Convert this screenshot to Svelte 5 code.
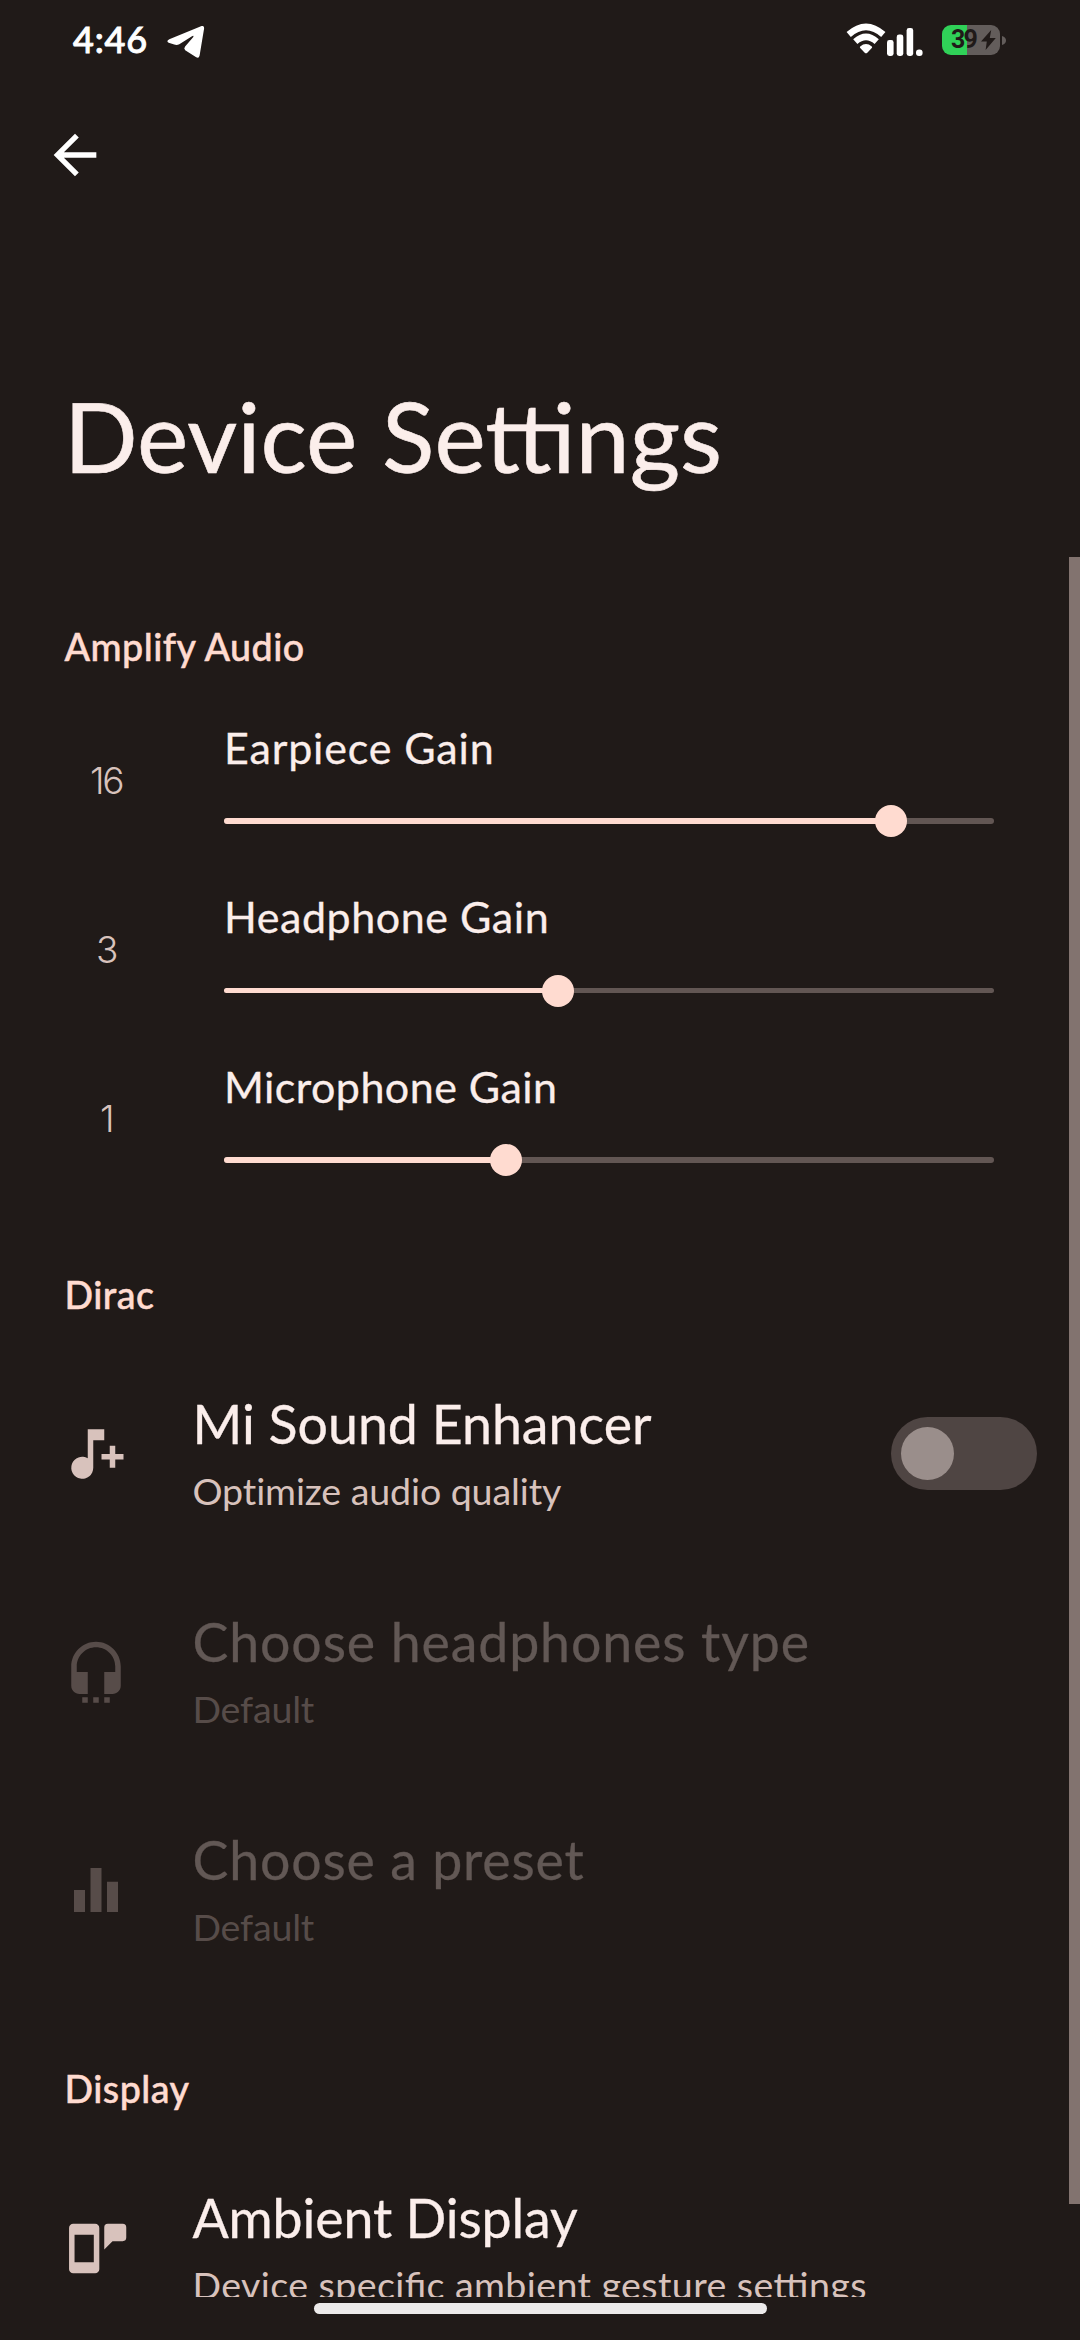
<script>
  // `tracking` is the letter spacing of each text, in pixels
  const sliders = [
    { label: 'Earpiece Gain', value: 16, fill: 86.6, tracking: 0.85 },
    { label: 'Headphone Gain', value: 3, fill: 43.4, tracking: 0.55 },
    { label: 'Microphone Gain', value: 1, fill: 36.6, tracking: 0.45 }
  ];
  const dirac = [
    { icon: 'note', title: 'Mi Sound Enhancer', sub: 'Optimize audio quality', toggle: true, tracking: 0, subTracking: -0.1 },
    { icon: 'headset', title: 'Choose headphones type', sub: 'Default', disabled: true, tracking: 0.87, subTracking: -0.2 },
    { icon: 'bars', title: 'Choose a preset', sub: 'Default', disabled: true, tracking: 0.8, subTracking: -0.2 }
  ];
  const display = [
    {
      icon: 'ambient',
      title: 'Ambient Display',
      sub: 'Device specific ambient gesture settings',
      ligatures: true,
      tracking: -0.15,
      subTracking: 0.4
    }
  ];
  const paths = {
    note: 'M9 3h6v4h-4v10a4 4 0 1 1-2-3.46zM17 9h2v3h3v2h-3v3h-2v-3h-3v-2h3z',
    headset:
      'M12 1c-4.97 0-9 4.03-9 9v7c0 1.66 1.34 3 3 3h3v-8H5v-2c0-3.87 3.13-7 7-7s7 3.13 7 7v2h-4v8h3c1.66 0 3-1.34 3-3v-7c0-4.97-4.03-9-9-9zM7 21.2h2v2H7zM11 21.2h2v2h-2zM15 21.2h2v2h-2z',
    bars: 'M10 20h4V4h-4zM4 20h4v-8H4zM16 9v11h4V9z',
    ambient:
      'M3.7 3.2h8a1.5 1.5 0 0 1 1.5 1.5v15a1.5 1.5 0 0 1-1.5 1.5h-8a1.5 1.5 0 0 1-1.5-1.5v-15a1.5 1.5 0 0 1 1.5-1.5zM4.2 7.2v10h7v-10zM16.3 3.2h5.4a1.3 1.3 0 0 1 1.3 1.3v3.7a1.3 1.3 0 0 1-1.3 1.3h-3.7l-3 3v-8a1.3 1.3 0 0 1 1.3-1.3z'
  };
</script>

{#snippet pref(item)}
  <div class="pref" class:disabled={item.disabled}>
    <svg class="icon" viewBox="0 0 24 24"><path fill-rule="evenodd" d={paths[item.icon]} /></svg>
    <div class="texts">
      <div class="title" style="letter-spacing:{item.tracking}px">{item.title}</div>
      <div class="sub" class:liga={item.ligatures} style="letter-spacing:{item.subTracking}px">{item.sub}</div>
    </div>
    {#if item.toggle}
      <div class="switch"><div class="knob"></div></div>
    {/if}
  </div>
{/snippet}

<div class="screen">
  <div class="status">
    <span class="time">4:46</span>
    <svg class="plane" viewBox="0 0 38 34"><path d="M2.3 14.2 34.6 1.1Q37.6.3 37.1 3.5L32.6 30.6Q31.9 34 28.8 32.1L18.2 25.2Q16.4 23.6 18.1 21.6L26.3 11.9Q27 10.1 25 11.2L12.3 19.2Q10 20.5 7.2 19.6L1.7 17.8Q-1.2 16 2.3 14.2Z" /></svg>
    <span class="spacer"></span>
    <svg class="wifi" viewBox="0 0 40 30">
      <path class="arc" d="M2.7 10.5Q20-4.8 37.3 10.5" />
      <path class="arc" d="M9.3 17.6Q20 8.2 30.7 17.6" />
      <path d="M14.2 22.4Q20 17.6 25.8 22.4Q26.5 23.2 25.8 23.9L21.3 28.7Q20 30 18.7 28.7L14.2 23.9Q13.5 23.2 14.2 22.4Z" />
    </svg>
    <svg class="signal" viewBox="0 0 36 28">
      <rect x="0" y="12" width="6.6" height="16" rx="2.4" />
      <rect x="9.7" y="6.5" width="6.6" height="21.5" rx="2.4" />
      <rect x="19.6" y="0" width="6.6" height="28" rx="2.4" />
      <rect x="29" y="21.4" width="6.6" height="6.6" rx="3" />
    </svg>
    <div class="battery">
      <span class="pct">39</span>
      <svg class="bolt" viewBox="0 0 15 20"><path d="M10.2 0 0 11.4h5.8L4.6 20 14.8 8H8.8z" /></svg>
    </div>
    <svg class="nub" viewBox="0 0 4 9"><path d="M0 0Q4 1.2 4 4.5T0 9z" /></svg>
  </div>

  <div class="appbar">
    <svg class="back" viewBox="0 0 24 24"><path d="M20 11H7.83l5.59-5.59L12 4l-8 8 8 8 1.41-1.41L7.83 13H20z" /></svg>
  </div>

  <h1>Device Settings</h1>

  <div class="list">
    <div class="label first">Amplify Audio</div>
    <div class="sliders">
      {#each sliders as s}
        <div class="slider">
          <div class="value">{s.value}</div>
          <div class="control">
            <div class="name" style="letter-spacing:{s.tracking}px">{s.label}</div>
            <div class="track">
              <div class="fill" style="width:{s.fill}%"><div class="thumb"></div></div>
            </div>
          </div>
        </div>
      {/each}
    </div>

    <div class="label dirac">Dirac</div>
    {#each dirac as item}{@render pref(item)}{/each}

    <div class="label display">Display</div>
    {#each display as item}{@render pref(item)}{/each}
  </div>

  <div class="navbar"><div class="pill"></div></div>
  <div class="scrollbar"></div>
</div>

<style>
  :global(body) {
    background: #201a18;
  }
  .screen {
    position: relative;
    box-sizing: border-box;
    width: 1080px;
    height: 2340px;
    overflow: hidden;
    display: flex;
    flex-direction: column;
    background: #201a18;
    color: #fbeeeb;
    font-family: Lato, 'Open Sans', sans-serif;
    white-space: nowrap;
  }
  svg {
    display: block;
    flex: none;
    fill: currentColor;
    overflow: visible;
  }
  .status {
    display: flex;
    align-items: flex-start;
    height: 80px;
    flex: none;
    color: #fff;
  }
  .time {
    margin: 17.5px 0 0 73px;
    width: 94px;
    font-size: 36px;
    line-height: 42px;
    font-weight: 500;
    letter-spacing: 0.8px;
    -webkit-text-stroke: 0.9px;
  }
  .plane {
    width: 38px;
    height: 34px;
    margin-top: 25px;
  }
  .spacer {
    flex: 1;
  }
  .wifi {
    width: 40px;
    height: 30px;
    margin-top: 24px;
  }
  .arc {
    fill: none;
    stroke: currentColor;
    stroke-width: 6.4;
  }
  .signal {
    width: 36px;
    height: 28px;
    margin: 28px 0 0 1px;
  }
  .battery {
    box-sizing: border-box;
    display: flex;
    align-items: center;
    width: 58px;
    height: 30px;
    margin: 25px 0 0 19px;
    padding-left: 9px;
    border-radius: 9px;
    background: linear-gradient(90deg, #30d158 25px, #635d5b 25px);
    color: #201a18;
  }
  .pct {
    width: 30px;
    font: 700 25px/30px Roboto, sans-serif;
    letter-spacing: -1.8px;
  }
  .bolt {
    width: 15px;
    height: 20px;
  }
  .nub {
    width: 4px;
    height: 9px;
    margin: 35.5px 74px 0 2px;
    color: #635d5b;
  }
  .appbar {
    flex: none;
    height: 295.5px;
    padding: 43px 0 0 43px;
    box-sizing: border-box;
  }
  .back {
    width: 64px;
    height: 64px;
    color: #fff;
  }
  h1 {
    flex: none;
    margin: 0 0 0 64px;
    height: 247px;
    font-size: 97px;
    line-height: 120px;
    font-weight: 400;
    -webkit-text-stroke: 0.6px;
  }
  .list {
    flex: none;
    height: 1674.5px;
    overflow: hidden;
  }
  .label {
    margin-left: 64.5px;
    height: 48px;
    font-size: 37.6px;
    line-height: 48px;
    font-weight: 500;
    letter-spacing: 0.5px;
    color: #ffdbd0;
    -webkit-text-stroke: 0.5px;
  }
  .sliders {
    margin: 29.5px 0 63px;
  }
  .slider {
    display: flex;
    height: 169.33px;
  }
  .value {
    width: 84px;
    margin: 56.5px 76px 0 64px;
    text-align: center;
    font-family: Inter, sans-serif;
    font-size: 37px;
    font-weight: 300;
    line-height: 48px;
    letter-spacing: -2.5px;
    color: #d8c2bc;
  }
  .control {
    width: 770px;
    padding-top: 20px;
  }
  .name {
    font-size: 43px;
    line-height: 56px;
    -webkit-text-stroke: 0.3px;
  }
  .track {
    height: 5.6px;
    margin-top: 42.4px;
    border-radius: 3px;
    background: #625653;
  }
  .fill {
    position: relative;
    height: 100%;
    border-radius: 3px;
    background: #ffdbd0;
  }
  .thumb {
    position: absolute;
    right: -16px;
    top: -13.2px;
    width: 32px;
    height: 32px;
    border-radius: 50%;
    background: #ffdbd0;
  }
  .label.dirac,
  .label.display {
    margin-bottom: 26px;
  }
  .label.display {
    margin-top: 66px;
  }
  .pref {
    display: flex;
    align-items: center;
    height: 218px;
    padding: 0 43px 0 63px;
  }
  .icon {
    width: 66px;
    height: 66px;
    color: #d8c2bc;
  }
  .texts {
    flex: 1;
    margin-left: 63.5px;
  }
  .title {
    font-size: 53.7px;
    line-height: 64px;
    -webkit-text-stroke: 0.3px;
  }
  .sub {
    margin-top: 9.5px;
    font-size: 37.6px;
    line-height: 52px;
    color: #d8c2bc;
  }
  .sub.liga {
    font-feature-settings: 'liga' 1;
  }
  .disabled .title {
    color: #625855;
  }
  .disabled .sub,
  .disabled .icon {
    color: #574c49;
  }
  .switch {
    box-sizing: border-box;
    width: 146px;
    height: 73px;
    padding: 10px;
    border-radius: 37px;
    background: #4f4543;
  }
  .knob {
    width: 53px;
    height: 53px;
    border-radius: 50%;
    background: #9a8e8b;
  }
  .navbar {
    flex: 1;
    display: flex;
    justify-content: center;
    padding-top: 6px;
  }
  .pill {
    width: 453px;
    height: 11px;
    border-radius: 6px;
    background: #edebeb;
  }
  .scrollbar {
    position: absolute;
    right: 0;
    top: 557px;
    width: 11px;
    height: 1647px;
    background: #82736f;
  }
</style>
